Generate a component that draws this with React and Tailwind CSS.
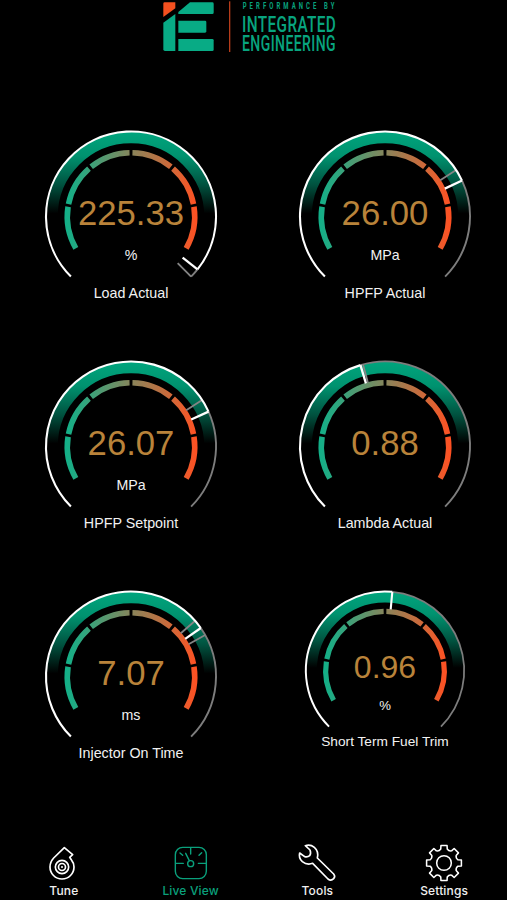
import React from "react";

const polar = (r, deg) => {
  const a = (deg * Math.PI) / 180;
  return [+(r * Math.cos(a)).toFixed(2), +(-r * Math.sin(a)).toFixed(2)];
};

// Clockwise arc between two angles, measured counter-clockwise from the x axis.
const arc = (r, from, to) => {
  const [x1, y1] = polar(r, from);
  const [x2, y2] = polar(r, to);
  return `M${x1} ${y1}A${r} ${r} 0 ${from - to > 180 ? 1 : 0} 1 ${x2} ${y2}`;
};

const tick = (deg) => {
  const [x1, y1] = polar(85, deg);
  const [x2, y2] = polar(66, deg);
  return `M${x1} ${y1}L${x2} ${y2}`;
};

const SEGMENTS = [
  [210, 171.2],
  [168.8, 131.3],
  [128.7, 91.3],
  [88.7, 51.3],
  [48.7, 11.2],
  [8.8, -30],
];

const GAUGES = [
  { id: "load", value: "225.33", unit: "%", label: "Load Actual", angle: -38.5, marks: [-45] },
  { id: "hpfp", value: "26.00", unit: "MPa", label: "HPFP Actual", angle: 25, marks: [33.2] },
  { id: "setpoint", value: "26.07", unit: "MPa", label: "HPFP Setpoint", angle: 24.2, marks: [33.2] },
  { id: "lambda", value: "0.88", unit: "", label: "Lambda Actual", angle: 106.8, marks: [105] },
  { id: "injector", value: "7.07", unit: "ms", label: "Injector On Time", angle: 34.8, marks: [41, 29.2] },
  { id: "trim", value: "0.96", unit: "%", label: "Short Term Fuel Trim", angle: 84.7, marks: [], small: true },
];

function Gauge({ id, value, unit, label, angle, marks, small }) {
  return (
    <div className="flex flex-col items-center">
      <div className={small ? "relative h-[140px] w-[162px]" : "relative h-[150px] w-[174px]"}>
        <svg viewBox="-87 -87.5 174 150" className="block h-full w-full overflow-visible" fill="none">
          <defs>
            <linearGradient id={`band-${id}`} gradientUnits="userSpaceOnUse" x1="0" y1="-85" x2="0" y2="-3">
              <stop offset="0" stopColor="#00a57d" />
              <stop offset="0.3" stopColor="#00926f" />
              <stop offset="0.65" stopColor="#00523f" />
              <stop offset="1" stopColor="#000000" />
            </linearGradient>
            <linearGradient id={`scale-${id}`} gradientUnits="userSpaceOnUse" x1="-66" y1="0" x2="66" y2="0">
              <stop offset="0" stopColor="#12b088" />
              <stop offset="0.15" stopColor="#31a57e" />
              <stop offset="0.5" stopColor="#87855b" />
              <stop offset="0.85" stopColor="#dc6434" />
              <stop offset="1" stopColor="#ff5022" />
            </linearGradient>
          </defs>
          <path d={arc(79, 180, 0)} stroke={`url(#band-${id})`} strokeWidth="11.5" />
          {SEGMENTS.map(([a, b]) => (
            <path key={a} d={arc(63.7, a, b)} stroke={`url(#scale-${id})`} strokeWidth="5.6" />
          ))}
          <path d={arc(85, angle, -45)} stroke="#7d7d7d" strokeWidth="1.9" />
          {marks.map((m) => (
            <path key={m} d={tick(m)} stroke="#858585" strokeWidth="1.8" />
          ))}
          <path d={arc(85, 225, angle)} stroke="#ffffff" strokeWidth="2.1" />
          <path d={tick(angle)} stroke="#ffffff" strokeWidth="2.3" />
        </svg>
        <div
          className={
            small
              ? "absolute inset-x-0 top-[59px] text-center text-[32px] leading-[38px] text-[#b9833a]"
              : "absolute inset-x-0 top-[65px] text-center text-[34.7px] leading-[38px] text-[#b9833a]"
          }
        >
          {value}
        </div>
        <div
          className={
            small
              ? "absolute inset-x-0 top-[109px] text-center text-[13.2px] leading-4 text-[#f2f2f2]"
              : "absolute inset-x-0 top-[118px] text-center text-[14.2px] leading-4 text-[#f2f2f2]"
          }
        >
          {unit}
        </div>
      </div>
      <div
        className={
          small
            ? "mt-[5px] whitespace-nowrap text-[13.7px] leading-4 text-[#f2f2f2]"
            : "mt-[6px] whitespace-nowrap text-[14.3px] leading-4 text-[#f2f2f2]"
        }
      >
        {label}
      </div>
    </div>
  );
}

function Logo() {
  return (
    <svg viewBox="0 0 200 60" className="block h-[60px] w-[200px]">
      <g transform="scale(.3333)">
        <path d="M44 7H76V25L40 51V11Q40 7 44 7Z" fill="#f4501f" />
        <g fill="#08ab85">
          <path d="M40 68L76 42V153H45Q40 153 40 148Z" />
          <path d="M85 36L120 7H187Q191 7 191 11V38Q191 42 187 42H85Z" />
          <path d="M85 62H165Q169 62 169 66V94Q169 98 165 98H85Z" />
          <path d="M85 117H187Q191 117 191 121V149Q191 153 187 153H85Z" />
        </g>
        <path d="M239 4V156" stroke="#b53c1a" strokeWidth="4" />
      </g>
      <g fill="#08a47f" fontFamily="Roboto, sans-serif">
        <text transform="translate(92.7 9.2) scale(.62 1)" fontSize="9.6" fontWeight="700" textLength="148" lengthAdjust="spacing">PERFORMANCE BY</text>
        <text transform="translate(92 31.7) scale(.68 1)" fontSize="22.6" fontWeight="500" textLength="138" lengthAdjust="spacing">INTEGRATED</text>
        <text transform="translate(92 51) scale(.62 1)" fontSize="22.6" fontWeight="500" textLength="151" lengthAdjust="spacing">ENGINEERING</text>
      </g>
    </svg>
  );
}

const icon = "block size-10 overflow-visible";

function TurboIcon() {
  return (
    <svg viewBox="40 25 120 120" className={icon} fill="none" stroke="#fff" strokeWidth="5" strokeLinejoin="round">
      <path d="M104 39L72 70Q61 82 61 97A36 36 0 0 0 133 97Q133 85 126 77L120 68L129 60Z" />
      <circle cx="97" cy="97" r="20" strokeWidth="5" />
      <circle cx="97" cy="97" r="10.5" strokeWidth="5" />
      <circle cx="97" cy="97" r="3" fill="#fff" stroke="none" />
    </svg>
  );
}

function GaugeIcon() {
  return (
    <svg viewBox="420 25 120 120" className={icon} fill="none" stroke="#0aa07c" strokeWidth="4.2" strokeLinecap="round">
      <rect x="436" y="38" width="93" height="94" rx="22" />
      <circle cx="482" cy="87" r="9" />
      <path d="M478 78L467 56M482 40V58M437 86H460M505 86H528M450 55L458 62M515 54L507 62" />
    </svg>
  );
}

function WrenchIcon() {
  return (
    <svg viewBox="51 25 120 120" className={icon} fill="none" stroke="#fff" strokeWidth="5" strokeLinejoin="round">
      <path d="M76 33Q91 28 103 38Q117 50 112 70L161 118Q167 125 161 132Q153 140 144 133L98 86Q81 92 67 81Q55 70 59 55L74 66Q83 68 89 63Q94 56 90 46Z" />
    </svg>
  );
}

function GearIcon() {
  const at = (r, deg) => {
    const [x, y] = polar(r, deg);
    return `${(491 + x).toFixed(1)} ${(85 + y).toFixed(1)}`;
  };
  const d = Array.from({ length: 8 }, (_, i) => {
    const c = 90 - i * 45;
    return `${i ? "L" : "M"}${at(53, c + 10)}L${at(53, c - 10)}L${at(43, c - 13)}Q${at(38, c - 22.5)} ${at(43, c - 32)}`;
  }).join("");
  return (
    <svg viewBox="431 25 120 120" className={icon} fill="none" stroke="#fff" strokeWidth="4.6" strokeLinejoin="round">
      <path d={`${d}Z`} />
      <circle cx="491" cy="85" r="22" />
    </svg>
  );
}

const TABS = [
  { label: "Tune", Icon: TurboIcon },
  { label: "Live View", Icon: GaugeIcon, active: true },
  { label: "Tools", Icon: WrenchIcon },
  { label: "Settings", Icon: GearIcon },
];

export default function App() {
  return (
    <div className="flex h-[900px] w-[507px] flex-col overflow-hidden bg-black font-['Liberation_Sans',Arial,sans-serif]">
      <header className="flex h-[129px] pl-[150px]">
        <Logo />
      </header>
      <main className="ml-1 grid w-[508px] grow auto-rows-[230px] grid-cols-2 content-start">
        {GAUGES.map((g) => (
          <Gauge key={g.id} {...g} />
        ))}
      </main>
      <nav className="grid h-[57px] shrink-0 grid-cols-4 font-[Inter,sans-serif]">
        {TABS.map(({ label, Icon, active }) => (
          <div key={label} className="flex flex-col items-center">
            <Icon />
            <span
              className={
                active
                  ? "pl-px text-[12px] font-medium leading-4 tracking-[0.15px] text-[#0aa07c]"
                  : "pl-px text-[12px] font-medium leading-4 tracking-[0.15px] text-[#f0f0f0]"
              }
            >
              {label}
            </span>
          </div>
        ))}
      </nav>
    </div>
  );
}
